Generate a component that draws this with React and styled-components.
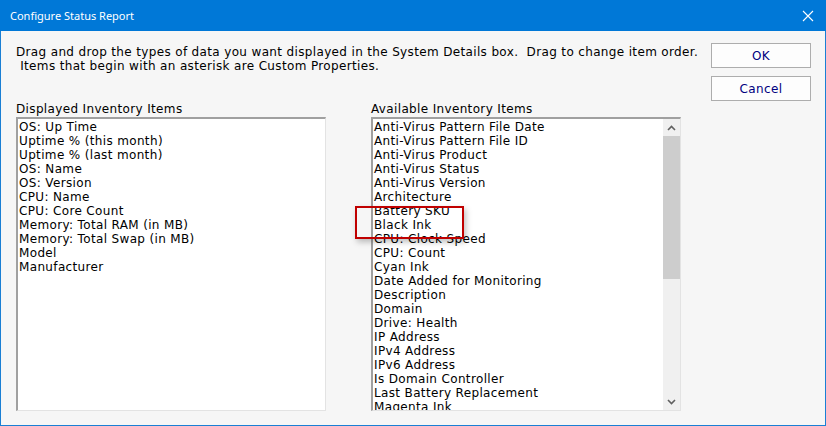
import React from "react";
import styled, { createGlobalStyle } from "styled-components";

const GlobalStyle = createGlobalStyle`
  html, body {
    margin: 0;
    padding: 0;
    background: #ffffff;
  }
`;

const Window = styled.div`
  width: 826px;
  height: 426px;
  box-sizing: border-box;
  border: 1px solid #1a7fd4;
  border-top: none;
  background: #f6f6f6;
  display: flex;
  flex-direction: column;
  position: relative;
  font-family: "DejaVu Sans", Verdana, sans-serif;
  font-size: 12px;
  letter-spacing: 0.35px;
  color: #000;
`;

const TitleBar = styled.div`
  height: 31px;
  margin: 0 -1px;
  background: #0078d7;
  color: #fff;
  display: flex;
  align-items: center;
  justify-content: space-between;
  padding: 0 10px;
  font-family: "Noto Sans", "Open Sans", sans-serif;
  font-size: 11px;
  letter-spacing: 0;
`;

const CloseButton = styled.div`
  width: 16px;
  height: 16px;
  display: flex;
  align-items: center;
  justify-content: center;
`;

const Body = styled.div`
  flex: 1;
  display: flex;
  padding: 12px 14px 0 15px;
  gap: 20px;
`;

const Main = styled.div`
  flex: 1;
  min-width: 0;
  display: flex;
  flex-direction: column;
  padding-top: 2px;
`;

const Intro = styled.p`
  margin: 0;
  line-height: 14px;
  white-space: pre;
`;

const Lists = styled.div`
  display: flex;
  gap: 45px;
  margin-top: 29px;
`;

const Column = styled.div`
  display: flex;
  flex-direction: column;
  width: 310px;
`;

const Label = styled.div`
  line-height: 14px;
  margin-bottom: 1px;
`;

const ListBox = styled.div`
  height: 294px;
  box-sizing: border-box;
  background: #fff;
  border-top: 2px solid #a0a0a0;
  border-left: 2px solid #a0a0a0;
  border-right: 1px solid #e3e3e3;
  border-bottom: 1px solid #e3e3e3;
  display: flex;
  overflow: hidden;
`;

const Items = styled.ul`
  list-style: none;
  margin: 0;
  padding: 1px 0 0 1px;
  flex: 1;
  overflow: hidden;
`;

const Item = styled.li`
  line-height: 14px;
  height: 14px;
  white-space: nowrap;
`;

const ScrollBar = styled.div`
  width: 17px;
  background: #f0f0f0;
  display: flex;
  flex-direction: column;
`;

const Arrow = styled.div`
  height: 17px;
  display: flex;
  align-items: center;
  justify-content: center;
`;

const Track = styled.div`
  flex: 1;
  display: flex;
  flex-direction: column;
`;

const Thumb = styled.div`
  height: 143px;
  background: #cdcdcd;
`;

const Buttons = styled.div`
  flex: none;
  display: flex;
  flex-direction: column;
  gap: 8px;
`;

const Button = styled.button`
  width: 100px;
  height: 25px;
  box-sizing: border-box;
  background: #fdfdfd;
  border: 1px solid #adadad;
  border-radius: 0;
  color: #000080;
  font-family: "DejaVu Sans", Verdana, sans-serif;
  font-size: 12px;
  letter-spacing: 0.35px;
  padding: 0;
`;

const Highlight = styled.div`
  position: absolute;
  left: 354px;
  top: 206px;
  width: 109px;
  height: 33px;
  box-sizing: border-box;
  border: 2px solid #c00000;
  box-shadow: 2px 3px 6px rgba(0, 0, 0, 0.25);
  pointer-events: none;
`;

const displayed = [
  "OS: Up Time",
  "Uptime % (this month)",
  "Uptime % (last month)",
  "OS: Name",
  "OS: Version",
  "CPU: Name",
  "CPU: Core Count",
  "Memory: Total RAM (in MB)",
  "Memory: Total Swap (in MB)",
  "Model",
  "Manufacturer",
];

const available = [
  "Anti-Virus Pattern File Date",
  "Anti-Virus Pattern File ID",
  "Anti-Virus Product",
  "Anti-Virus Status",
  "Anti-Virus Version",
  "Architecture",
  "Battery SKU",
  "Black Ink",
  "CPU: Clock Speed",
  "CPU: Count",
  "Cyan Ink",
  "Date Added for Monitoring",
  "Description",
  "Domain",
  "Drive: Health",
  "IP Address",
  "IPv4 Address",
  "IPv6 Address",
  "Is Domain Controller",
  "Last Battery Replacement",
  "Magenta Ink",
];

function Chevron({ up }) {
  return (
    <svg width="9" height="6" viewBox="0 0 9 6">
      <path
        d={up ? "M1 5 L4.5 1.5 L8 5" : "M1 1 L4.5 4.5 L8 1"}
        fill="none"
        stroke="#606060"
        strokeWidth="1.6"
      />
    </svg>
  );
}

export default function App() {
  return (
    <>
      <GlobalStyle />
      <Window>
        <TitleBar>
          <span>Configure Status Report</span>
          <CloseButton>
            <svg width="12" height="12" viewBox="0 0 12 12">
              <path d="M1 1 L11 11 M11 1 L1 11" stroke="#fff" strokeWidth="1.1" />
            </svg>
          </CloseButton>
        </TitleBar>
        <Body>
          <Main>
            <Intro>
              {"Drag and drop the types of data you want displayed in the System Details box.  Drag to change item order.\n Items that begin with an asterisk are Custom Properties."}
            </Intro>
            <Lists>
              <Column>
                <Label>Displayed Inventory Items</Label>
                <ListBox>
                  <Items>
                    {displayed.map((t) => (
                      <Item key={t}>{t}</Item>
                    ))}
                  </Items>
                </ListBox>
              </Column>
              <Column>
                <Label>Available Inventory Items</Label>
                <ListBox>
                  <Items>
                    {available.map((t) => (
                      <Item key={t}>{t}</Item>
                    ))}
                  </Items>
                  <ScrollBar>
                    <Arrow>
                      <Chevron up />
                    </Arrow>
                    <Track>
                      <Thumb />
                    </Track>
                    <Arrow>
                      <Chevron />
                    </Arrow>
                  </ScrollBar>
                </ListBox>
              </Column>
            </Lists>
          </Main>
          <Buttons>
            <Button>OK</Button>
            <Button>Cancel</Button>
          </Buttons>
        </Body>
        <Highlight />
      </Window>
    </>
  );
}
